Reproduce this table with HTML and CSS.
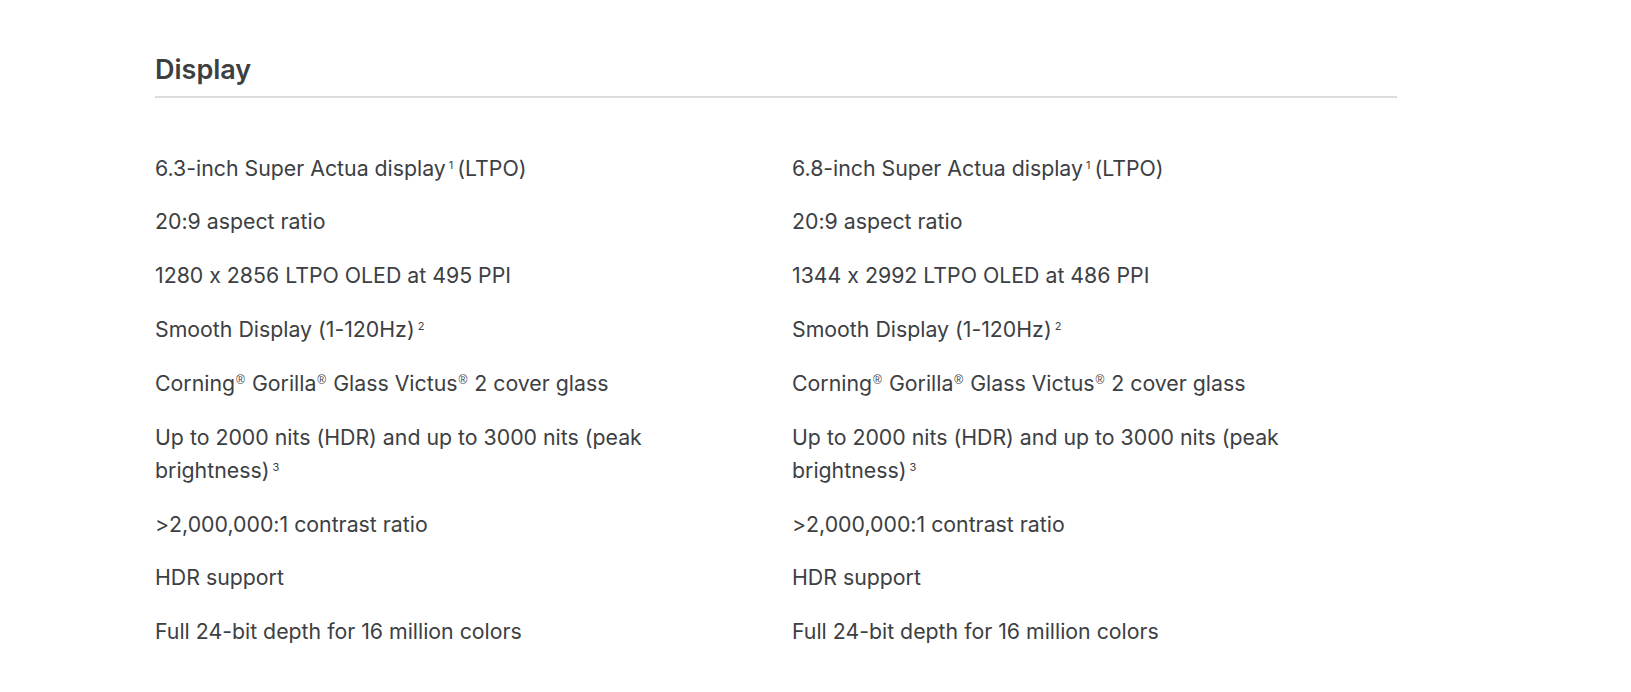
FILE: index.html
```html
<!DOCTYPE html>
<html lang="en">
<head>
<meta charset="utf-8">
<title>Display</title>
<link rel="stylesheet" href="styles.css">
</head>
<body>
<section class="spec">
  <h2 class="spec-title">Display</h2>
  <div class="spec-grid">
    <ul class="spec-col">
      <li>6.3-inch Super Actua display<sup class="fn">1</sup> (LTPO)</li>
      <li>20:9 aspect ratio</li>
      <li>1280 x 2856 LTPO OLED at 495 PPI</li>
      <li>Smooth Display (1-120Hz)<sup class="fn">2</sup></li>
      <li>Corning<sup class="reg">®</sup> Gorilla<sup class="reg">®</sup> Glass Victus<sup class="reg">®</sup> 2 cover glass</li>
      <li><span>Up to 2000 nits (HDR) and up to 3000 nits (peak</span> <span>brightness)</span><sup class="fn">3</sup></li>
      <li>&gt;2,000,000:1 contrast ratio</li>
      <li>HDR support</li>
      <li>Full 24-bit depth for 16 million colors</li>
    </ul>
    <ul class="spec-col">
      <li>6.8-inch Super Actua display<sup class="fn">1</sup> (LTPO)</li>
      <li>20:9 aspect ratio</li>
      <li>1344 x 2992 LTPO OLED at 486 PPI</li>
      <li>Smooth Display (1-120Hz)<sup class="fn">2</sup></li>
      <li>Corning<sup class="reg">®</sup> Gorilla<sup class="reg">®</sup> Glass Victus<sup class="reg">®</sup> 2 cover glass</li>
      <li><span>Up to 2000 nits (HDR) and up to 3000 nits (peak</span> <span>brightness)</span><sup class="fn">3</sup></li>
      <li>&gt;2,000,000:1 contrast ratio</li>
      <li>HDR support</li>
      <li>Full 24-bit depth for 16 million colors</li>
    </ul>
  </div>
</section>
</body>
</html>
```

FILE: styles.css
```css
html, body {
  margin: 0;
  padding: 0;
  background: #ffffff;
}

body {
  font-family: Inter, "Liberation Sans", sans-serif;
  font-feature-settings: "calt" 0;
  color: #3c4043;
}

.spec {
  width: 1242px;
  margin-left: 155px;
  padding-top: 52px;
}

.spec-title {
  margin: 0;
  font-size: 27px;
  line-height: 36px;
  font-weight: 600;
  color: #3c4043;
  padding-bottom: 8px;
  border-bottom: 2px solid #dadce0;
}

.spec-grid {
  display: grid;
  grid-template-columns: 1fr 1fr;
  column-gap: 32px;
  padding-top: 53.6px;
}

.spec-col {
  list-style: none;
  margin: 0;
  padding: 0;
  display: flex;
  flex-direction: column;
  gap: 20.5px;
}

.spec-col li {
  font-size: 21.3px;
  line-height: 33.3px;
  max-width: 560px;
}

.fn {
  font-size: 11px;
  line-height: 0;
  vertical-align: 7px;
  margin: 0 -2px 0 3px;
}

.reg {
  font-family: "Liberation Sans", sans-serif;
  font-size: 12px;
  line-height: 0;
  vertical-align: 7px;
  margin: 0 1px 0 1px;
}
```
